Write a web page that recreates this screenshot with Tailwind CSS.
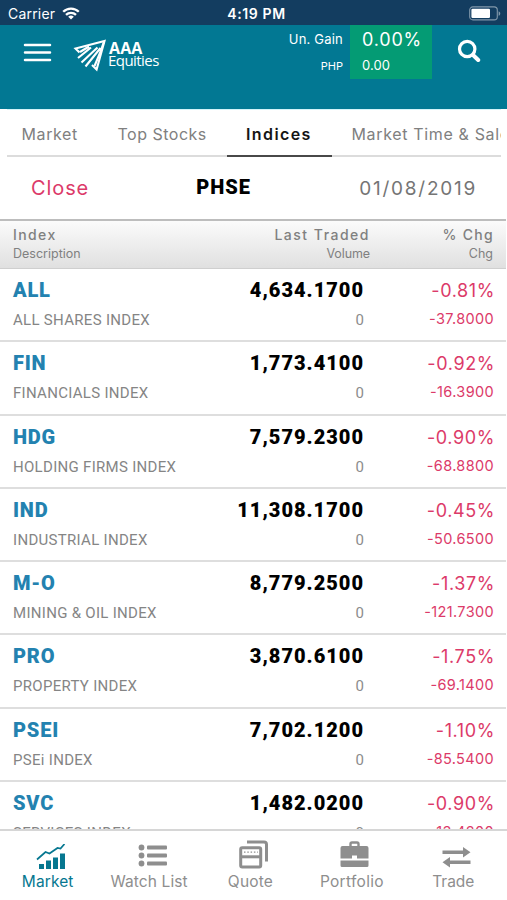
<!DOCTYPE html>
<html lang="en">
<head>
<meta charset="utf-8">
<title>AAA Equities</title>
<script src="https://cdn.jsdelivr.net/npm/@tailwindcss/browser@4"></script>
</head>
<body class="bg-white">
<div class="w-[507px] h-[900px] overflow-hidden flex flex-col font-['Inter',sans-serif] whitespace-nowrap">

  <div class="h-[25px] shrink-0 bg-[#133d60] text-white grid grid-cols-[1fr_auto_1fr] items-center pl-2 pr-[6px] pt-[2px]">
    <div class="flex items-center gap-[7px] text-[14px] leading-5 tracking-[0.2px]">Carrier
      <svg width="18" height="13" viewBox="0 0 18 13" fill="none" stroke="#fff" stroke-width="2.3"><path d="M1.2 4.8a11 11 0 0 1 15.6 0M4 7.9a7 7 0 0 1 10 0"/><path d="M9 12.6 6.2 9.8a4 4 0 0 1 5.6 0z" fill="#fff" stroke="none"/></svg>
    </div>
    <div class="text-[14px] leading-5 font-semibold tracking-[0.6px] pl-[4px]">4:19 PM</div>
    <svg class="justify-self-end" width="32" height="15" viewBox="0 0 32 15"><rect x=".7" y=".9" width="27.6" height="13" rx="3.2" fill="none" stroke="#8298ab" stroke-width="1.1"/><rect x="2.4" y="2.8" width="18.6" height="9.2" rx="1.2" fill="#fff"/><path d="M29.6 5.2c2.2.8 2.2 3.8 0 4.6z" fill="#8298ab"/></svg>
  </div>

  <header class="h-[84px] shrink-0 bg-[#027893] text-white flex items-start">
    <svg class="ml-[23px] mt-[17px]" width="29" height="21" viewBox="0 0 29 21" stroke="#fff" stroke-width="2.5" stroke-linecap="round"><path d="M2 2.9h25M2 10.4h25M2 17.9h25"/></svg>
    <svg class="ml-[21px] mt-[13px]" width="35" height="34" viewBox="0 0 35 34" fill="none" stroke="#fff" stroke-width="2.1"><path d="M6.500 14.500 2.500 10.500 31.500 3 23.600 31.500 19 27"/><path d="M5 20 18 9.500 M8.500 24.500 24.500 9.500 M12.500 28.500 27.500 10 M7 14l9-5.500 M21.500 28 27 15 31 3.500"/></svg>
    <div class="ml-[1px] mt-[16px] w-[61px] font-['Open_Sans',sans-serif]">
      <div class="text-[16px] leading-[14px] font-bold tracking-[0.1px]">AAA</div>
      <div class="text-[15px] leading-[10px] tracking-[-0.55px] -ml-px">Equities</div>
    </div>
    <div class="ml-auto flex">
      <div class="w-[60px] text-right mr-[7px]">
        <div class="mt-[4px] text-[13px] leading-5 tracking-[0.2px]">Un. Gain</div>
        <div class="mt-[7px] text-[11px] leading-5">PHP</div>
      </div>
      <div class="w-[82px] h-[54px] bg-[#049b74] pl-3">
        <div class="mt-[3px] text-[18px] leading-6 tracking-[0.8px]">0.00%</div>
        <div class="mt-[3px] text-[13px] leading-5 tracking-[0.1px]">0.00</div>
      </div>
    </div>
    <svg class="ml-[25px] mr-[26px] mt-[14px]" width="24" height="24" viewBox="0 0 24 24" fill="none" stroke="#fff" stroke-linecap="round"><circle cx="10.2" cy="10" r="7.7" stroke-width="3.2"/><path d="m16 16 5.2 5" stroke-width="4"/></svg>
  </header>

  <nav class="h-[48px] shrink-0 ml-[7px] w-[494px] overflow-hidden border-t border-[#d3f4f9] text-[16px] leading-[49px] tracking-[0.6px] text-[#808080] flex *:h-[47px]">
    <div class="w-[96px] shrink-0 border-b-2 border-[#dcdcdc] pl-[14.5px]">Market</div>
    <div class="w-[124px] shrink-0 border-b-2 border-[#dcdcdc] pl-[14.5px] tracking-[0.5px]">Top Stocks</div>
    <div class="w-[105px] shrink-0 border-b-2 border-[#484848] pl-[19px] font-semibold text-[#151515] tracking-[1.4px]">Indices</div>
    <div class="w-[190px] shrink-0 border-b-2 border-[#dcdcdc] pl-[19.5px] tracking-[0.65px]">Market Time &amp; Sales</div>
  </nav>

  <div class="h-[62px] shrink-0 grid grid-cols-3 items-center pl-[31px] pr-[30px]">
    <div class="text-[20px] tracking-[0.9px] text-[#dc3a69]">Close</div>
    <div class="text-[20px] font-black font-['Roboto',sans-serif] tracking-[1px] text-black pl-[16.5px] -mt-[3px]">PHSE</div>
    <div class="text-[19px] tracking-[1.75px] text-[#757575] text-right pt-[2px]">01/08/2019</div>
  </div>

  <div class="h-[50px] shrink-0 w-[506px] border-t-2 border-b border-t-[#bdbdbd] border-b-[#cfcfcf] bg-linear-to-b from-[#fbfbfb] to-[#e0e0e0] text-[#808080] grid grid-cols-[200px_170px_1fr] pr-[13px] pt-[4px]">
    <div class="pl-[13px]">
      <div class="text-[14px] leading-5 font-medium tracking-[1.4px]">Index</div>
      <div class="text-[12.5px] leading-[18px] tracking-[0px]">Description</div>
    </div>
    <div class="text-right">
      <div class="text-[14px] leading-5 font-medium tracking-[1.5px]">Last Traded</div>
      <div class="text-[12.5px] leading-[18px] tracking-[-0.1px]">Volume</div>
    </div>
    <div class="text-right">
      <div class="text-[14px] leading-5 font-medium tracking-[1.3px] -mr-px">% Chg</div>
      <div class="text-[12.5px] leading-[18px]">Chg</div>
    </div>
  </div>

  <main id="rows" class="flex-1 min-h-0 overflow-hidden w-[506px]"></main>

  <footer class="h-[71px] shrink-0 border-t-2 border-[#d6d6d6] bg-white grid grid-cols-5 -ml-[3px] w-[510px] pr-[3px] text-[15.5px] leading-[22px] text-[#8e8e8e] text-center">
    <div class="flex flex-col items-center text-[#067790]">
      <svg class="mt-[13px] ml-[6px]" width="30" height="27" viewBox="0 0 30 27" fill="currentColor"><path d="M3 20h5v5H3zM10 16.500h5V25h-5zM17 13.500h5V25h-5zM24 9.500h5V25h-5z"/><path d="m1 15.500 8.500-7.500 4 1.500 8-5.500 3 .5L28.500 0" fill="none" stroke="currentColor" stroke-width="1.700"/></svg>
      <div class="tracking-[0.1px]">Market</div>
    </div>
    <div class="flex flex-col items-center">
      <svg class="mt-[13px] ml-[6px]" width="29" height="27" viewBox="0 0 29 27" fill="currentColor"><circle cx="3.500" cy="3.500" r="2.900"/><circle cx="3.500" cy="11.500" r="2.900"/><circle cx="3.500" cy="19.500" r="2.900"/><rect x="9" y="1.500" width="20" height="4" rx="1"/><rect x="9" y="9.500" width="20" height="4" rx="1"/><rect x="9" y="17.500" width="20" height="4" rx="1"/></svg>
      <div class="tracking-[0.1px]">Watch List</div>
    </div>
    <div class="flex flex-col items-center">
      <svg class="mt-[9px] ml-[6px] mb-[2px]" width="29" height="29" viewBox="0 0 29 29" fill="none" stroke="currentColor"><path d="M8 2h17a2.500 2.500 0 0 1 2.500 2.500v17" stroke-width="3"/><rect x="1.700" y="7.700" width="20" height="19.300" rx="1.500" stroke-width="3"/><path d="M2 16.800h19" stroke-width="3"/><path d="M5 12.200h14" stroke-width="1.200" stroke-dasharray="1.500 1.800"/></svg>
      <div class="tracking-[0.2px]">Quote</div>
    </div>
    <div class="flex flex-col items-center">
      <svg class="mt-[9px] ml-[6px] mb-[3px]" width="29" height="28" viewBox="0 0 29 28"><path d="M10.500 7V4A1.500 1.500 0 0 1 12 2.500h5A1.500 1.500 0 0 1 18.500 4v3" fill="none" stroke="currentColor" stroke-width="2.400"/><path d="M2.500 6h24a2 2 0 0 1 2 2v10.500H17v-3h-5v3H.5V8a2 2 0 0 1 2-2zM.5 20.500h28v5A1.500 1.500 0 0 1 27 27H2a1.500 1.500 0 0 1-1.500-1.500z" fill="currentColor"/></svg>
      <div class="tracking-[0.3px]">Portfolio</div>
    </div>
    <div class="flex flex-col items-center">
      <svg class="mt-[15px] ml-[6px] mb-[3px]" width="29" height="22" viewBox="0 0 29 22" fill="currentColor"><path d="M.5 4.500H21V1l7.500 5.200L21 11.500V8H.5zM28.500 14.500H8V11L.5 16.300 8 21.500V18h20.500z"/></svg>
      <div>Trade</div>
    </div>
  </footer>
</div>
<script>
const data = [
  ["ALL","ALL SHARES INDEX","4,634.1700","-0.81%","-37.8000"],
  ["FIN","FINANCIALS INDEX","1,773.4100","-0.92%","-16.3900"],
  ["HDG","HOLDING FIRMS INDEX","7,579.2300","-0.90%","-68.8800"],
  ["IND","INDUSTRIAL INDEX","11,308.1700","-0.45%","-50.6500"],
  ["M-O","MINING & OIL INDEX","8,779.2500","-1.37%","-121.7300"],
  ["PRO","PROPERTY INDEX","3,870.6100","-1.75%","-69.1400"],
  ["PSEI","PSEi INDEX","7,702.1200","-1.10%","-85.5400"],
  ["SVC","SERVICES INDEX","1,482.0200","-0.90%","-13.4200"]
];
document.getElementById("rows").innerHTML = data.map(([code, name, last, pct, chg]) => `
  <div class="h-[73.3px] border-b-2 border-[#dedede] grid grid-cols-[200px_164px_1fr] pr-[12px] pt-[8px]">
    <div class="pl-[13px]">
      <div class="text-[20px] leading-[26px] font-black font-['Roboto',sans-serif] tracking-[0.8px] text-[#2382b0]">${code}</div>
      <div class="mt-[5px] text-[15px] leading-[24px] font-['Roboto',sans-serif] tracking-[0.3px] text-[#858585]">${name.replace("&", "&amp;")}</div>
    </div>
    <div class="text-right">
      <div class="text-[20px] leading-[26px] font-black font-['Roboto',sans-serif] tracking-[1px] text-black">${last}</div>
      <div class="mt-[5px] text-[15px] leading-[24px] font-['Roboto',sans-serif] text-[#8c8c8c]">0</div>
    </div>
    <div class="text-right text-[#dc3a69] pt-px">
      <div class="text-[18px] leading-[26px] tracking-[0.6px] -mr-px">${pct}</div>
      <div class="mt-[3px] text-[14.5px] leading-[24px] tracking-[0.35px]">${chg}</div>
    </div>
  </div>`).join("");
</script>
</body>
</html>
